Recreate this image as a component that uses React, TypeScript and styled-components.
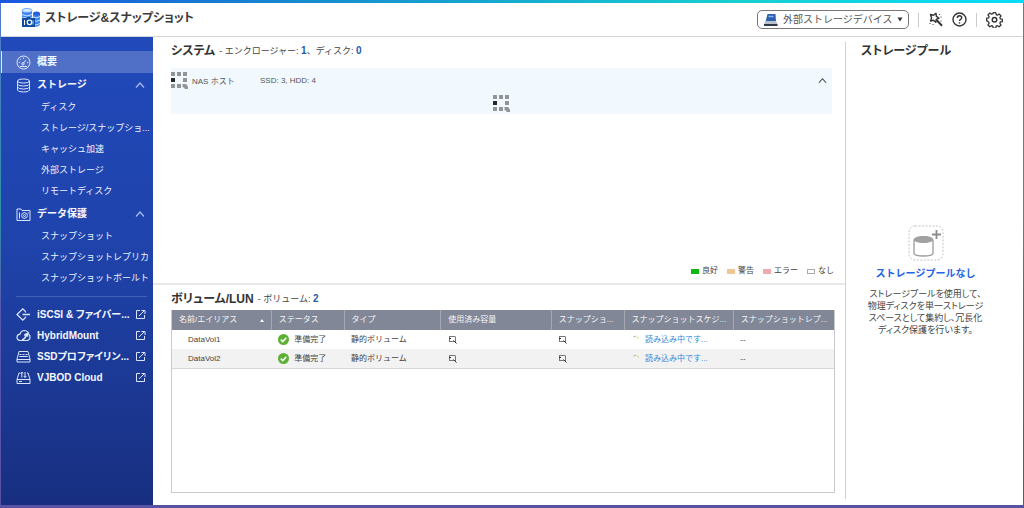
import React from "react";
import styled, { createGlobalStyle, css } from "styled-components";

const GlobalStyle = createGlobalStyle`
  * { box-sizing: border-box; }
  body {
    margin: 0;
    font-family: "Liberation Sans", "Noto Sans CJK JP", sans-serif;
    font-size: 8px;
    color: #444;
    background: #fff;
  }
  svg { display: block; flex: none; }
  h1, h2, p, ul { margin: 0; padding: 0; }
  button { font: inherit; border: 0; padding: 0; background: none; color: inherit; cursor: pointer; }
`;

const Frame = styled.div`
  display: flex;
  flex-direction: column;
  min-height: 100vh;
  padding: 0 1px 3px;
  background: linear-gradient(180deg, #5577cf 0%, #2f93a8 42%, #5a55b0 62%, #5852a3 100%);
`;

const AccentBar = styled.div`
  height: 3px;
  margin: 0 -1px;
  background: linear-gradient(90deg, #1b55e0, #1688cf 28%, #17cfd0 72%, #08dcfa);
`;

const Header = styled.header`
  display: flex;
  align-items: center;
  justify-content: space-between;
  height: 34px;
  padding: 0 20px;
  background: #fff;
  border-bottom: 1px solid #d5d6d9;
`;

const Brand = styled.div`
  display: flex;
  align-items: center;
  gap: 4px;
  padding-bottom: 4px;
`;

const BrandTitle = styled.h1`
  font-size: 12px;
  line-height: 16px;
  font-weight: 700;
  color: #3b3b3b;
  font-feature-settings: "palt";
`;

const Tools = styled.div`
  display: flex;
  align-items: center;
  gap: 9px;
  color: #333;
`;

const DeviceBox = styled.label`
  display: flex;
  align-items: center;
  gap: 5px;
  height: 19px;
  width: 152px;
  padding: 0 5px;
  border: 1px solid #777;
  border-radius: 5px;
`;

const DeviceSelect = styled.select`
  appearance: none;
  flex: 1;
  min-width: 0;
  padding: 0;
  border: 0;
  background: none;
  font: inherit;
  font-size: 10px;
  line-height: 16px;
  color: #555;
`;

const ToolRule = styled.span`
  width: 1px;
  height: 14px;
  background: #ccc;
`;

const IconButton = styled.button`
  display: flex;
`;

const Body = styled.div`
  display: flex;
  flex: 1;
  background: #fff;
`;

const Sidebar = styled.nav`
  flex: none;
  width: 152px;
  padding-top: 14px;
  color: #fff;
  background: linear-gradient(180deg, #2149ba 0%, #1f43ab 45%, #182f80 100%);
`;

const itemRow = css`
  display: flex;
  align-items: center;
  width: 100%;
  padding: 0 8px 0 15px;
  gap: 6px;
  font-size: 10px;
  line-height: 16px;
  font-weight: 700;
  text-align: left;
  text-decoration: none;
  white-space: nowrap;
  color: #f4f7ff;
`;

const TopItem = styled.a`
  ${itemRow}
  height: 22px;
  background: #5070c8;
  box-shadow: inset 1px 0 0 #dfe6ff;
`;

const GroupButton = styled.button`
  ${itemRow}
  height: 24px;
  font: 700 10px/16px "Liberation Sans", "Noto Sans CJK JP", sans-serif;
`;

const ToolLink = styled.a`
  ${itemRow}
  height: 21px;
  padding-right: 7px;
  font-feature-settings: "palt";
`;

const ItemText = styled.span`
  flex: 1;
  min-width: 0;
`;

const SubList = styled.ul`
  list-style: none;
`;

const SubLink = styled.a`
  display: block;
  height: 21px;
  padding-left: 40px;
  font-size: 9px;
  line-height: 21px;
  white-space: nowrap;
  text-decoration: none;
  color: #edf1ff;
`;

const SideRule = styled.hr`
  height: 1px;
  margin: 7px 6px 7px 15px;
  border: 0;
  background: #4361b3;
`;

const Main = styled.main`
  display: flex;
  flex-direction: column;
  flex: 1;
  min-width: 0;
`;

const SystemSection = styled.section`
  display: flex;
  flex-direction: column;
  flex: 7 0 0;
  padding: 5px 11px 5px 18px;
  border-bottom: 2px solid #e8e8e8;
`;

const VolumeSection = styled.section`
  display: flex;
  flex-direction: column;
  flex: 6 0 0;
  padding: 5px 10px 12px 18px;
`;

const Heading = styled.h2`
  display: flex;
  align-items: center;
  gap: 4px;
  font-size: 12px;
  line-height: 18px;
  font-weight: 700;
  color: #333;
  font-feature-settings: "palt";
`;

const HeadingNote = styled.span`
  font-size: 9px;
  font-weight: 400;
  font-feature-settings: normal;
  color: #444;
`;

const Count = styled.b`
  font-size: 10px;
  font-weight: 700;
  color: #2a5aa8;
`;

const Enclosure = styled.div`
  margin: 8px 2px 0 0;
  height: 46px;
  background: #f1f9fe;
`;

const EnclosureHead = styled.div`
  display: flex;
  align-items: center;
  height: 25px;
  padding-right: 5px;
  gap: 4px;
  color: #555;
`;

const HostName = styled.span`
  width: 64px;
`;

const Spacer = styled.span`
  flex: 1;
`;

const EnclosureBody = styled.div`
  display: flex;
  justify-content: center;
  padding-top: 2px;
`;

const Legend = styled.ul`
  display: flex;
  justify-content: flex-end;
  gap: 9px;
  margin-top: auto;
  list-style: none;
`;

const LegendItem = styled.li`
  display: flex;
  align-items: center;
  gap: 3px;
  line-height: 14px;
`;

const Swatch = styled.i<{ $fill: string; $edge?: string }>`
  width: 8px;
  height: 5px;
  margin-top: 1px;
  background: ${(p) => p.$fill};
  border: 1px solid ${(p) => p.$edge ?? p.$fill};
`;

const TableBox = styled.div`
  flex: 1;
  margin-top: 2px;
  border: 1px solid #c9cacd;
  border-top: 0;
`;

const Table = styled.table`
  width: 100%;
  table-layout: fixed;
  border-collapse: collapse;
`;

const HeadCell = styled.th<{ $width: string }>`
  width: ${(p) => p.$width};
  height: 20px;
  padding: 0 7px;
  font-weight: 400;
  line-height: 16px;
  text-align: left;
  white-space: nowrap;
  overflow: hidden;
  color: #f5f6f8;
  background: #818796;
  & + & { border-left: 1px solid #a5a9b4; }
`;

const SortHead = styled.button`
  display: flex;
  align-items: center;
  justify-content: space-between;
  width: 100%;
`;

const Row = styled.tr`
  &:nth-child(even) { background: #f2f2f2; }
  &:last-child { border-bottom: 1px solid #d8d8d8; }
`;

const Cell = styled.td<{ $indent?: boolean }>`
  height: 19px;
  padding: 0 7px 0 ${(p) => (p.$indent ? "16px" : "7px")};
  line-height: 16px;
  white-space: nowrap;
  color: #444;
`;

const CellFlow = styled.span<{ $loading?: boolean }>`
  display: flex;
  align-items: center;
  gap: 5px;
  color: ${(p) => (p.$loading ? "#2f86dd" : "inherit")};
`;

const PoolPanel = styled.aside`
  display: flex;
  flex: none;
  width: 178px;
  padding: 5px 0 6px;
`;

const PoolInner = styled.div`
  display: flex;
  flex-direction: column;
  flex: 1;
  padding-left: 15px;
  border-left: 1px solid #d2d2d2;
`;

const EmptyPool = styled.div`
  display: flex;
  flex-direction: column;
  align-items: center;
  justify-content: center;
  flex: 1;
  padding: 2px 33px 0 0;
  text-align: center;
`;

const PoolTitle = styled.p`
  margin-top: 5px;
  font-size: 10px;
  line-height: 16px;
  font-weight: 700;
  color: #2463e6;
`;

const PoolText = styled.p`
  margin-top: 6px;
  font-size: 9px;
  line-height: 12px;
  white-space: nowrap;
  font-feature-settings: "palt";
  color: #444;
`;

const BrandIcon = () => (
  <svg width="20" height="20" viewBox="0 0 20 20">
    <path d="M12 5h7v12q-3 3-7 1z" fill="#3d86ee" />
    <ellipse cx="15.500" cy="5.500" rx="3.500" ry="2" fill="#2460d8" />
    <path d="M12 9q4 2 7-.5M12 12.500q4 2 7-.5M12 16q4 2 7-.5" stroke="#bfe0ff" fill="none" />
    <path d="M1 2.500v7h10v-7z" fill="#3f86f0" />
    <ellipse cx="6" cy="2.500" rx="5" ry="2" fill="#d8ecff" stroke="#4d90ee" strokeWidth=".8" />
    <path d="M1 6.500q5 3 10 0" stroke="#cfe5ff" fill="none" />
    <path d="M1 10h4l1-1h3l1 1h4v9H1z" fill="#0f4e9e" />
    <path d="M3.500 12v5" stroke="#fff" />
    <circle cx="8.500" cy="14.300" r="2.300" fill="none" stroke="#fff" strokeWidth="1.200" />
    <path d="M12 12.500v4" stroke="#9ecbf5" />
  </svg>
);

const DeviceIcon = () => (
  <svg width="15" height="14" viewBox="0 0 15 14">
    <path d="M4.500 1h8l.5 8H2.500z" fill="#2c5fae" />
    <path d="M5.500 3.500h5" stroke="#8db4ea" strokeWidth="1.500" />
    <path d="M2.500 8h10.500l1.500 3H1z" fill="#b8c2cc" />
    <path d="M1 11h13.500v2H1z" fill="#2e3a48" />
  </svg>
);

const WandIcon = () => (
  <svg width="15" height="15" viewBox="0 0 15 15" fill="none" stroke="#333" strokeWidth="1.400" strokeLinejoin="round">
    <path d="M2.500 2.500 5.500 3.200 8 1.300 8.400 4.400 11 6 8.300 7.300 7.800 10.300 5.500 8.300 2.500 9 3.600 6z" />
    <path d="M8.800 8.300 14 13.700" strokeWidth="2" />
    <path d="M11.500 2.500h.1M13 5h.1M2 11.500h.1M5 12.500h.1M13 9h.1" strokeWidth="1" strokeLinecap="round" />
  </svg>
);

const HelpIcon = () => (
  <svg width="15" height="15" viewBox="0 0 15 15" fill="none" stroke="#333" strokeWidth="1.400">
    <circle cx="7.500" cy="7.500" r="6.500" />
    <path d="M5.300 6q0-2.200 2.200-2.200T9.700 5.800q0 1-1.100 1.600t-1.100 1.700" />
    <path d="M7.500 10.300v1.300" strokeWidth="1.500" />
  </svg>
);

const GearIcon = () => (
  <svg width="17" height="17" viewBox="0 0 24 24" fill="none" stroke="#333" strokeWidth="2" strokeLinejoin="round">
    <path d="M10 1.500h4l.6 3.200 2 .8 2.700-1.800 2.900 2.900-1.800 2.700.8 2 3.200.6v.2h-.1v3.500l-3.100.5-.8 2 1.800 2.700-2.900 2.900-2.700-1.800-2 .8-.6 3.200h-4l-.6-3.200-2-.8-2.700 1.800-2.900-2.900 1.800-2.700-.8-2L-.3 14v-3.800l3.100-.5.800-2-1.800-2.700 2.900-2.900 2.700 1.800 2-.8z" transform="translate(1.200 1) scale(.9)" />
    <circle cx="12" cy="12.300" r="3.200" />
  </svg>
);

const lineIcon = { width: 15, height: 15, viewBox: "0 0 15 15", fill: "none", stroke: "#dce5ff" };

const GaugeIcon = () => (
  <svg {...lineIcon}>
    <circle cx="7.500" cy="7.500" r="6.500" />
    <path d="M7 8.500 10 5M7.500 2.500v1.300M2.800 7.500H4M11 7.500h1.300M4.200 4.200l.8.800M4 11.500h7" />
    <circle cx="7" cy="8.800" r="1.200" />
  </svg>
);

const DatabaseIcon = () => (
  <svg {...lineIcon}>
    <ellipse cx="7.500" cy="3" rx="6" ry="2" />
    <path d="M1.500 3v9q0 2 6 2t6-2V3M1.500 6q0 2 6 2t6-2M1.500 9q0 2 6 2t6-2" />
  </svg>
);

const SnapshotIcon = () => (
  <svg {...lineIcon}>
    <path d="M1 3.500V2h4l1 1.500h8v10H1zM3.500 5.500v6M12.300 5.500v1" />
    <circle cx="8.500" cy="8.500" r="2.900" />
    <circle cx="8.500" cy="8.500" r="1" />
  </svg>
);

const IscsiIcon = () => (
  <svg {...lineIcon} strokeWidth="1.300">
    <path d="M9.500 4.500 6.800 1.800 1 7.500l5.800 5.700 2.700-2.700M6.500 7.500H14M9.500 4.500v1M9.500 10.500v-1" />
  </svg>
);

const CloudIcon = () => (
  <svg {...lineIcon} strokeWidth="1.200">
    <path d="M4 12.500Q.8 12 1 9q.3-2.500 3-2.800Q5 2.500 8.500 2.500q3.800.3 4.500 4 1.300 1 1 3-.4 2.700-3 3z" />
    <path d="M6 12q3-1 4.500-5M8.200 7.200l3-1.700.5 3.200" strokeWidth="1.600" />
  </svg>
);

const SsdIcon = () => (
  <svg {...lineIcon}>
    <path d="M3 2.500h9l2 7.500v3H1v-3zM1 10.500h13" />
    <path d="M3.500 5.500h2M6.500 5.500h2M9.500 5.500h2M3.300 7.500h8.400" strokeWidth="1.200" />
  </svg>
);

const VjbodIcon = () => (
  <svg {...lineIcon}>
    <path d="M4 3H3L1 9.500v4h13v-4L12 3h-1M1 9.500h13M3 11.500h3M5.800 7.500V2M4.500 3.500 5.800 2l1.200 1.500M9 2v5.500M7.800 6 9 7.500 10.300 6" />
  </svg>
);

const ExternalIcon = () => (
  <svg width="11" height="11" viewBox="0 0 11 11" fill="none" stroke="#dce5ff">
    <path d="M5 1.500H1.500v8h8V6M4 7 9.500 1.500M6.500 1.500h3.500V5" />
  </svg>
);

const Chevron = ({ color, size }: { color: string; size: number }) => (
  <svg width={size} height={size} viewBox="0 0 10 10" fill="none" stroke={color} strokeWidth="1.200">
    <path d="M1 7.500 5 3l4 4.500" />
  </svg>
);

const CaretIcon = () => (
  <svg width="6" height="5" viewBox="0 0 6 5"><path d="M.5.5h5L3 4.500z" fill="#333" /></svg>
);

const SortIcon = () => (
  <svg width="4" height="3" viewBox="0 0 4 3"><path d="M2 0l2 3H0z" fill="#fff" /></svg>
);

const HostIcon = () => (
  <svg width="17" height="17" viewBox="0 0 17 17" fill="#929596">
    <path d="M0 0h4v4H0zM6 0h4v4H6zM12 0h4v4h-4zM12 6h4v4h-4zM0 12h4v4H0zM6 12h4v4H6z" />
    <path d="M0 6h4v4H0z" fill="#222a2e" />
    <path d="M11.500 12h3.500l2 2.500V17h-3l-2.500-2.500z" />
  </svg>
);

const SmallHostIcon = () => (
  <svg width="9" height="9" viewBox="0 0 9 9" fill="none" stroke="#777">
    <path d="M1 1.500h6.500M1.500 1.500v5M7.500 2v5M1 6.500h5" />
    <path d="M1 3.500h2M5.500 5.500 8.500 8.500" stroke="#333" />
  </svg>
);

const CheckIcon = () => (
  <svg width="11" height="11" viewBox="0 0 11 11">
    <circle cx="5.500" cy="5.500" r="5.500" fill="#5cb135" />
    <path d="M2.800 5.600 4.800 7.600 8.300 3.800" fill="none" stroke="#fff" strokeWidth="1.500" />
  </svg>
);

const SpinnerIcon = () => (
  <svg width="9" height="9" viewBox="0 0 9 9" fill="none">
    <path d="M2.500 2 5 1" stroke="#b9b08a" />
    <path d="M6 1.500 7.500 3.500" stroke="#d6cf55" />
  </svg>
);

const EmptyPoolIcon = () => (
  <svg width="36" height="36" viewBox="0 0 36 36" fill="none">
    <rect x="1" y="1" width="34" height="34" rx="6" stroke="#c4c4c4" strokeDasharray="2 1.500" />
    <path d="M6 15v13q0 3 9.500 3t9.500-3V15" stroke="#9b9b9b" strokeWidth="1.300" />
    <ellipse cx="15.500" cy="14.500" rx="9.500" ry="3" fill="#a2a2a2" stroke="#9b9b9b" />
    <path d="M28.500 5v9M24 9.500h9" stroke="#8c8c8c" strokeWidth="1.800" />
  </svg>
);

const storageItems = ["ディスク", "ストレージ/スナップショ...", "キャッシュ加速", "外部ストレージ", "リモートディスク"];
const protectionItems = ["スナップショット", "スナップショットレプリカ", "スナップショットボールト"];

const toolLinks = [
  { label: "iSCSI & ファイバー...", Icon: IscsiIcon },
  { label: "HybridMount", Icon: CloudIcon },
  { label: "SSDプロファイリン...", Icon: SsdIcon },
  { label: "VJBOD Cloud", Icon: VjbodIcon },
];

const columns = [
  { label: "名前/エイリアス", width: "15%" },
  { label: "ステータス", width: "11%" },
  { label: "タイプ", width: "14.6%" },
  { label: "使用済み容量", width: "16.7%" },
  { label: "スナップショ...", width: "11%" },
  { label: "スナップショットスケジ...", width: "16.5%" },
  { label: "スナップショットレプ...", width: "15.2%" },
];

const NavGroup = ({ label, icon, items }: { label: string; icon: React.ReactNode; items: string[] }) => (
  <>
    <GroupButton type="button" aria-expanded="true">
      {icon}
      <ItemText>{label}</ItemText>
      <Chevron color="#a9bbf0" size={10} />
    </GroupButton>
    <SubList>
      {items.map((item) => (
        <li key={item}><SubLink href="#">{item}</SubLink></li>
      ))}
    </SubList>
  </>
);

export default function App() {
  return (
    <Frame>
      <GlobalStyle />
      <AccentBar />
      <Header>
        <Brand>
          <BrandIcon />
          <BrandTitle>ストレージ&amp;スナップショット</BrandTitle>
        </Brand>
        <Tools>
          <DeviceBox>
            <DeviceIcon />
            <DeviceSelect aria-label="外部ストレージデバイス">
              <option>外部ストレージデバイス</option>
            </DeviceSelect>
            <CaretIcon />
          </DeviceBox>
          <ToolRule />
          <IconButton type="button" aria-label="ツール"><WandIcon /></IconButton>
          <IconButton type="button" aria-label="ヘルプ"><HelpIcon /></IconButton>
          <ToolRule />
          <IconButton type="button" aria-label="設定"><GearIcon /></IconButton>
        </Tools>
      </Header>
      <Body>
        <Sidebar>
          <TopItem href="#" aria-current="page"><GaugeIcon />概要</TopItem>
          <NavGroup label="ストレージ" icon={<DatabaseIcon />} items={storageItems} />
          <NavGroup label="データ保護" icon={<SnapshotIcon />} items={protectionItems} />
          <SideRule />
          {toolLinks.map(({ label, Icon }) => (
            <ToolLink href="#" key={label}>
              <Icon />
              <ItemText>{label}</ItemText>
              <ExternalIcon />
            </ToolLink>
          ))}
        </Sidebar>
        <Main>
          <SystemSection>
            <Heading>
              システム
              <HeadingNote>- エンクロージャー: <Count>1</Count>、ディスク: <Count>0</Count></HeadingNote>
            </Heading>
            <Enclosure>
              <EnclosureHead>
                <HostIcon />
                <HostName>NAS ホスト</HostName>
                <span>SSD: 3, HDD: 4</span>
                <Spacer />
                <button type="button" aria-label="折りたたむ"><Chevron color="#444" size={9} /></button>
              </EnclosureHead>
              <EnclosureBody><HostIcon /></EnclosureBody>
            </Enclosure>
            <Legend>
              <LegendItem><Swatch $fill="#12b812" />良好</LegendItem>
              <LegendItem><Swatch $fill="#eec795" />警告</LegendItem>
              <LegendItem><Swatch $fill="#f0aab0" />エラー</LegendItem>
              <LegendItem><Swatch $fill="#fff" $edge="#aaa" />なし</LegendItem>
            </Legend>
          </SystemSection>
          <VolumeSection>
            <Heading>
              ボリューム/LUN
              <HeadingNote>- ボリューム: <Count>2</Count></HeadingNote>
            </Heading>
            <TableBox>
              <Table>
                <thead>
                  <tr>
                    {columns.map(({ label, width }, i) => (
                      <HeadCell key={label} $width={width} scope="col">
                        {i === 0 ? <SortHead type="button">{label}<SortIcon /></SortHead> : label}
                      </HeadCell>
                    ))}
                  </tr>
                </thead>
                <tbody>
                  {["DataVol1", "DataVol2"].map((name) => (
                    <Row key={name}>
                      <Cell $indent>{name}</Cell>
                      <Cell><CellFlow><CheckIcon />準備完了</CellFlow></Cell>
                      <Cell>静的ボリューム</Cell>
                      <Cell><SmallHostIcon /></Cell>
                      <Cell><SmallHostIcon /></Cell>
                      <Cell><CellFlow $loading><SpinnerIcon />読み込み中です...</CellFlow></Cell>
                      <Cell>--</Cell>
                    </Row>
                  ))}
                </tbody>
              </Table>
            </TableBox>
          </VolumeSection>
        </Main>
        <PoolPanel>
          <PoolInner>
            <Heading>ストレージプール</Heading>
            <EmptyPool>
              <EmptyPoolIcon />
              <PoolTitle>ストレージプールなし</PoolTitle>
              <PoolText>
                ストレージプールを使用して、<br />
                物理ディスクを単一ストレージ<br />
                スペースとして集約し、冗長化<br />
                ディスク保護を行います。
              </PoolText>
            </EmptyPool>
          </PoolInner>
        </PoolPanel>
      </Body>
    </Frame>
  );
}
